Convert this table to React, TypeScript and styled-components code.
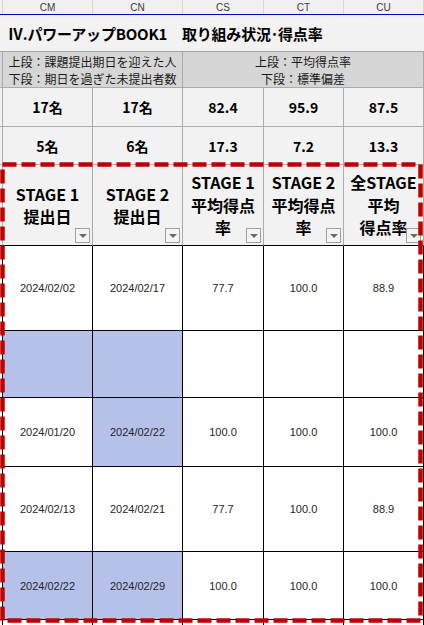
import * as React from 'react';
import styled, { createGlobalStyle } from 'styled-components';

const cols = '3px 90px 90px 81px 80px 80px';
const font = '"Liberation Sans", "Noto Sans CJK JP", sans-serif';

const Global = createGlobalStyle`
  html, body {
    margin: 0;
    padding: 0;
    background: #ffffff;
    overflow: hidden;
  }
  body {
    font-family: ${font};
  }
`;

const Sheet = styled.div`
  position: relative;
  width: 424px;
  height: 625px;
  overflow: hidden;
  background: #ffffff;
`;

const Row = styled.div<{ $h: number; $bg?: string }>`
  display: grid;
  grid-template-columns: ${cols};
  height: ${(p) => p.$h}px;
  background: ${(p) => p.$bg || '#ffffff'};
`;

const ColBar = styled(Row)`
  border-bottom: 1px solid #0000c8;
  box-sizing: border-box;
`;

const ColLabel = styled.div`
  display: flex;
  align-items: center;
  justify-content: center;
  font-size: 10px;
  color: #3a3a3a;
  border-right: 1px solid #d6d6d6;
  padding-top: 1px;
`;

const Title = styled.div`
  grid-column: 1 / -1;
  display: flex;
  align-items: center;
  padding-left: 8px;
  font-family: "Noto Sans CJK JP", sans-serif;
  font-weight: 700;
  font-size: 15px;
  color: #000;
  border-bottom: 1px solid #a6a6a6;
  letter-spacing: -0.2px;
`;

const Cell = styled.div<{ $span?: number; $line?: string }>`
  grid-column: span ${(p) => p.$span || 1};
  display: flex;
  align-items: center;
  justify-content: center;
  border-right: 1px solid ${(p) => p.$line || '#ababab'};
  border-bottom: 1px solid ${(p) => p.$line || '#ababab'};
  min-width: 0;
  overflow: hidden;
  box-sizing: border-box;
`;

const NoteCell = styled(Cell)`
  flex-direction: column;
  font-family: "Noto Sans CJK JP", sans-serif;
  font-size: 12px;
  line-height: 17px;
  color: #1a1a1a;
`;

const StatCell = styled(Cell)`
  font-family: "Noto Sans CJK JP", sans-serif;
  font-weight: 700;
  font-size: 14px;
  color: #000;
`;

const HeadCell = styled(Cell)`
  position: relative;
  flex-direction: column;
  font-family: "Noto Sans CJK JP", sans-serif;
  font-weight: 700;
  font-size: 16px;
  line-height: 22.5px;
  color: #000;
  white-space: nowrap;
  border-bottom: 1px solid #000;
`;

const FilterBtn = styled.div`
  position: absolute;
  right: 2px;
  bottom: 2px;
  width: 13px;
  height: 13px;
  background: #f4f4f4;
  border: 1px solid #a0a0a0;
  display: flex;
  align-items: center;
  justify-content: center;
  &::after {
    content: '';
    border-left: 4px solid transparent;
    border-right: 4px solid transparent;
    border-top: 4px solid #6a6a6a;
    margin-top: 1px;
  }
`;

const DataCell = styled(Cell)<{ $hl?: boolean }>`
  background: ${(p) => (p.$hl ? '#b6c1ea' : '#ffffff')};
  font-size: 11px;
  color: #262626;
  border-right: 1px solid #000;
  border-bottom: 1px solid #000;
`;

const Frame = styled.svg`
  position: absolute;
  left: 0;
  top: 0;
  pointer-events: none;
`;

type Rec = { h: number; v: string[]; hl: boolean[] };

const data: Rec[] = [
  { h: 85, v: ['2024/02/02', '2024/02/17', '77.7', '100.0', '88.9'], hl: [false, false, false, false, false] },
  { h: 67, v: ['', '', '', '', ''], hl: [true, true, false, false, false] },
  { h: 69, v: ['2024/01/20', '2024/02/22', '100.0', '100.0', '100.0'], hl: [false, true, false, false, false] },
  { h: 85, v: ['2024/02/13', '2024/02/21', '77.7', '100.0', '88.9'], hl: [false, false, false, false, false] },
  { h: 68, v: ['2024/02/22', '2024/02/29', '100.0', '100.0', '100.0'], hl: [true, true, false, false, false] },
  { h: 20, v: ['', '', '', '', ''], hl: [false, false, false, false, false] },
];

const heads: string[][] = [
  ['STAGE 1', '提出日'],
  ['STAGE 2', '提出日'],
  ['STAGE 1', '平均得点', '率'],
  ['STAGE 2', '平均得点', '率'],
  ['全STAGE', '平均', '得点率'],
];

const App = () => {
  return (
    <>
      <Global />
      <Sheet>
        <ColBar $h={15} $bg="#f0f0f0">
          <ColLabel />
          {['CM', 'CN', 'CS', 'CT', 'CU'].map((c) => (
            <ColLabel key={c}>{c}</ColLabel>
          ))}
        </ColBar>

        <Row $h={37} $bg="#f2f2f2">
          <Title>Ⅳ.パワーアップBOOK1　取り組み状況･得点率</Title>
        </Row>

        <Row $h={36} $bg="#d6d6d6">
          <Cell />
          <NoteCell $span={2}>
            <span>上段：課題提出期日を迎えた人</span>
            <span>下段：期日を過ぎた未提出者数</span>
          </NoteCell>
          <NoteCell $span={3}>
            <span>上段：平均得点率</span>
            <span>下段：標準偏差</span>
          </NoteCell>
        </Row>

        <Row $h={39} $bg="#f2f2f2">
          <Cell />
          {['17名', '17名', '82.4', '95.9', '87.5'].map((v, i) => (
            <StatCell key={i}>{v}</StatCell>
          ))}
        </Row>
        <Row $h={38} $bg="#f2f2f2">
          <Cell />
          {['5名', '6名', '17.3', '7.2', '13.3'].map((v, i) => (
            <StatCell key={i}>{v}</StatCell>
          ))}
        </Row>

        <Row $h={81} $bg="#f2f2f2">
          <HeadCell />
          {heads.map((lines, i) => (
            <HeadCell key={i}>
              {lines.map((l, j) => (
                <span key={j}>{l}</span>
              ))}
              <FilterBtn />
            </HeadCell>
          ))}
        </Row>

        {data.map((r, i) => (
          <Row key={i} $h={r.h}>
            <DataCell />
            {r.v.map((v, j) => (
              <DataCell key={j} $hl={r.hl[j]}>{v}</DataCell>
            ))}
          </Row>
        ))}

        <Frame width={424} height={625}>
          <rect
            x={2.5}
            y={164.5}
            width={418}
            height={456}
            fill="none"
            stroke="#c00000"
            strokeWidth={4.5}
            strokeDasharray="14 5"
          />
        </Frame>
      </Sheet>
    </>
  );
};

export default App;
